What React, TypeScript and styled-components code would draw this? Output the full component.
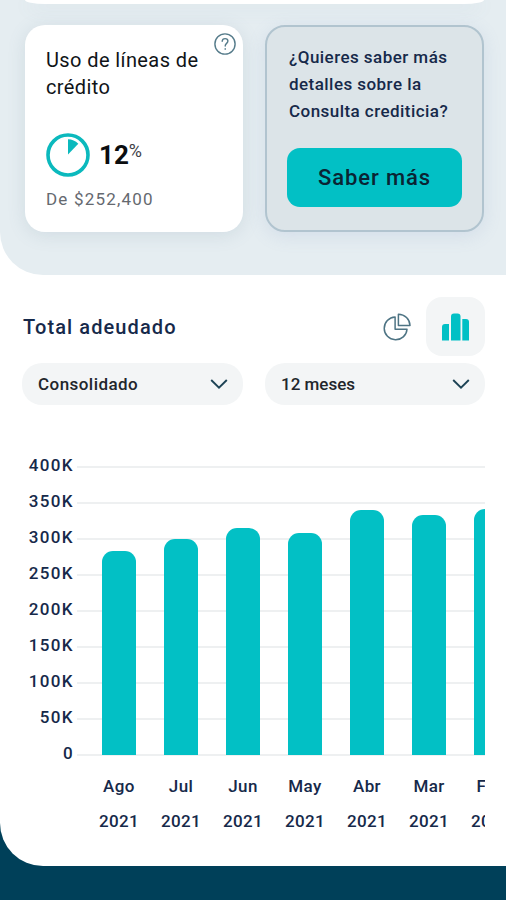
import styled, { createGlobalStyle } from "styled-components";

const TEAL = "#02c0c5";
const NAVY = "#16294a";

const STEP = 36;
const MAX_VALUE = 400;
const TICKS = ["400K", "350K", "300K", "250K", "200K", "150K", "100K", "50K", "0"];

interface IMonth {
  month: string;
  year: string;
  value: number;
}

const MONTHS: IMonth[] = [
  { month: "Ago", year: "2021", value: 283 },
  { month: "Jul", year: "2021", value: 300 },
  { month: "Jun", year: "2021", value: 315 },
  { month: "May", year: "2021", value: 308 },
  { month: "Abr", year: "2021", value: 340 },
  { month: "Mar", year: "2021", value: 333 },
  { month: "Feb", year: "2021", value: 342 },
];

const HelpIcon = () => (
  <svg width="22" height="22" viewBox="0 0 22 22" fill="none" stroke="#557b8a" strokeWidth="1.4" strokeLinecap="round">
    <circle cx="11" cy="11" r="10.1" />
    <path d="M8.2 8.3c.1-1.7 1.2-2.7 2.9-2.7s2.8 1 2.8 2.5c0 2.3-2.7 2.3-2.7 4.9" />
    <path d="M11.2 15.7v.5" />
  </svg>
);

const UsageRing = () => (
  <svg width="44" height="44" viewBox="0 0 44 44">
    <circle cx="22" cy="22" r="20" fill="none" stroke="#0bb9bd" strokeWidth="3.6" />
    <path d="M22 21.5V6.3c4 0 7.4 1.6 10.3 4.5z" fill="#0bb9bd" />
  </svg>
);

const PieIcon = () => (
  <svg width="28" height="28" viewBox="0 0 28 28" fill="none" stroke="#4e7484" strokeWidth="1.5" strokeLinejoin="round">
    <path d="M12.100 4A11.400 11.400 0 1 0 24 16.200H12.100z" />
    <path d="M15.400 1.200V12.600H27A11.600 11.600 0 0 0 15.400 1.200z" />
  </svg>
);

const BarsIcon = () => (
  <svg width="28" height="28" viewBox="0 0 28 28" fill={TEAL}>
    <path d="M0 27.5V14q0-3 3-3H7V27.500z" />
    <path d="M9 27.500V3.500q0-3 3-3H15.500q3 0 3 3V27.500z" />
    <path d="M20.300 27.500V6H24q3 0 3 3V27.500z" />
  </svg>
);

const ChevronIcon = () => (
  <svg width="18" height="12" viewBox="0 0 18 12" fill="none" stroke="#1d4355" strokeWidth="1.9">
    <path d="M1.200 2l7.800 7.600L16.800 2" />
  </svg>
);

const App = () => {
  return (
    <>
      <GlobalStyle />
      <Page>
        <Panel>
          <Summary>
            <PreviousCard />
            <CardRow>
              <UsageCard>
                <HelpButton aria-label="Ayuda">
                  <HelpIcon />
                </HelpButton>
                <UsageTitle>Uso de líneas de crédito</UsageTitle>
                <Usage>
                  <UsageRing />
                  <Percent>
                    12<PercentSign>%</PercentSign>
                  </Percent>
                </Usage>
                <Limit>De $252,400</Limit>
              </UsageCard>
              <InfoCard>
                <Question>
                  ¿Quieres saber más
                  <br />
                  detalles sobre la
                  <br />
                  Consulta crediticia?
                </Question>
                <MoreButton>Saber más</MoreButton>
              </InfoCard>
            </CardRow>
          </Summary>

          <Debt>
            <DebtHeader>
              <DebtTitle>Total adeudado</DebtTitle>
              <ViewButton aria-label="Gráfica circular">
                <PieIcon />
              </ViewButton>
              <ViewButton $active aria-label="Gráfica de barras">
                <BarsIcon />
              </ViewButton>
            </DebtHeader>
            <Filters>
              <Select>
                <SelectLabel $spacing={0.45}>Consolidado</SelectLabel>
                <ChevronIcon />
              </Select>
              <Select>
                <SelectLabel $spacing={0}>12 meses</SelectLabel>
                <ChevronIcon />
              </Select>
            </Filters>

            <Chart>
              <Axis>
                {TICKS.map((tick) => (
                  <Tick key={tick}>{tick}</Tick>
                ))}
              </Axis>
              <Plot>
                <Grid>
                  {TICKS.map((tick) => (
                    <GridLine key={tick} />
                  ))}
                </Grid>
                <Columns>
                  {MONTHS.map(({ month, year, value }) => (
                    <Column key={month}>
                      <BarTrack>
                        <Bar style={{ height: (value / MAX_VALUE) * STEP * 8 }} />
                      </BarTrack>
                      <ColumnLabel>{month}</ColumnLabel>
                      <ColumnLabel>{year}</ColumnLabel>
                    </Column>
                  ))}
                </Columns>
              </Plot>
            </Chart>
          </Debt>
        </Panel>
      </Page>
    </>
  );
};

export default App;

const GlobalStyle = createGlobalStyle`
  * {
    box-sizing: border-box;
  }

  body {
    margin: 0;
    overflow: hidden;
    font-family: Roboto, "Liberation Sans", sans-serif;
  }

  button {
    font-family: inherit;
    border: none;
    padding: 0;
  }

  svg {
    display: block;
    flex-shrink: 0;
  }
`;

const Page = styled.div`
  width: 506px;
  height: 900px;
  overflow: hidden;
  background: #004059;
`;

const Panel = styled.main`
  height: 866px;
  background: #fff;
  border-bottom-left-radius: 43px;
  overflow: hidden;
`;

const Summary = styled.section`
  height: 275px;
  padding: 0 22px 0 25px;
  background: #e5edf1;
  border-bottom-left-radius: 43px;
`;

const PreviousCard = styled.div`
  height: 4px;
  background: #fff;
  border-radius: 0 0 20px 20px / 0 0 4px 4px;
  box-shadow: 0 4px 18px rgba(110, 140, 160, 0.16);
`;

const CardRow = styled.div`
  display: grid;
  grid-template-columns: 218px 219px;
  gap: 22px;
  height: 207px;
  margin-top: 21px;
`;

const UsageCard = styled.article`
  position: relative;
  padding: 22px 21px 0;
  background: #fff;
  border-radius: 20px;
  box-shadow: 0 3px 18px rgba(100, 130, 150, 0.16);
`;

const HelpButton = styled.button`
  position: absolute;
  top: 8px;
  right: 7px;
  background: none;
`;

const UsageTitle = styled.h2`
  margin: 0;
  font-size: 20px;
  font-weight: 400;
  line-height: 27px;
  letter-spacing: 0.4px;
  color: #101418;
`;

const Usage = styled.div`
  display: flex;
  align-items: center;
  gap: 9px;
  margin-top: 32px;
`;

const Percent = styled.strong`
  display: flex;
  align-items: flex-start;
  font-size: 26px;
  font-weight: 700;
  line-height: 30px;
  color: #0b0d10;
`;

const PercentSign = styled.span`
  font-size: 18px;
  font-weight: 400;
  line-height: 21px;
  color: #3c4045;
`;

const Limit = styled.p`
  margin: 11px 0 0;
  font-size: 17px;
  line-height: 22px;
  letter-spacing: 1.2px;
  color: #65696f;
`;

const InfoCard = styled.article`
  padding: 17px 20px 0;
  background: #dce4e8;
  border: 2px solid #b1c4cf;
  border-radius: 20px;
  box-shadow: 0 4px 18px rgba(120, 145, 190, 0.16);
`;

const Question = styled.p`
  margin: 0 0 0 2px;
  font-size: 17px;
  font-weight: 500;
  line-height: 27px;
  letter-spacing: 0.45px;
  white-space: nowrap;
  color: ${NAVY};
`;

const MoreButton = styled.button`
  display: block;
  width: 175px;
  height: 59px;
  margin-top: 23px;
  border-radius: 13px;
  background: ${TEAL};
  font-size: 22px;
  font-weight: 500;
  letter-spacing: 0.9px;
  color: #0a2433;
`;

const Debt = styled.section`
  padding: 22px 21px 0 22px;
`;

const DebtHeader = styled.header`
  display: flex;
  align-items: center;
  height: 59px;
`;

const DebtTitle = styled.h2`
  flex: 1;
  margin: 0 0 0 1px;
  font-size: 20px;
  font-weight: 500;
  letter-spacing: 1.1px;
  color: ${NAVY};
`;

const ViewButton = styled.button<{ $active?: boolean }>`
  display: flex;
  align-items: center;
  justify-content: center;
  width: 59px;
  height: 59px;
  border-radius: 16px;
  background: ${({ $active }) => ($active ? "#f3f5f6" : "none")};
`;

const Filters = styled.div`
  display: grid;
  grid-template-columns: 221px 220px;
  gap: 22px;
  margin-top: 7px;
`;

const Select = styled.div`
  display: flex;
  align-items: center;
  justify-content: space-between;
  height: 42px;
  padding: 0 15px 0 16px;
  border-radius: 20px;
  background: #f3f5f6;
`;

const SelectLabel = styled.span<{ $spacing: number }>`
  font-size: 17px;
  font-weight: 500;
  letter-spacing: ${({ $spacing }) => $spacing}px;
  color: #22262b;
`;

const Chart = styled.div`
  display: flex;
  gap: 3px;
  margin-top: 42px;
`;

const Axis = styled.div`
  width: 52px;
`;

const Tick = styled.div`
  height: ${STEP}px;
  font-size: 17px;
  font-weight: 500;
  line-height: ${STEP}px;
  letter-spacing: 1.4px;
  text-align: right;
  color: ${NAVY};
`;

const Plot = styled.div`
  display: grid;
  width: 408px;
  padding-top: 19px;
  overflow: hidden;
`;

const Grid = styled.div`
  grid-area: 1 / 1;
`;

const GridLine = styled.div`
  height: ${STEP}px;
  border-top: 2px solid #eef0f1;
`;

const Columns = styled.div`
  grid-area: 1 / 1;
  display: flex;
  width: 434px;
  padding-left: 11px;
`;

const Column = styled.div`
  flex: 0 0 62px;
  display: flex;
  flex-direction: column;
  align-items: center;
`;

const BarTrack = styled.div`
  display: flex;
  align-items: flex-end;
  height: 289px;
  margin-bottom: 14px;
`;

const Bar = styled.div`
  width: 34.5px;
  border-radius: 11px 11px 0 0;
  background: ${TEAL};
`;

const ColumnLabel = styled.span`
  font-size: 17px;
  font-weight: 500;
  line-height: 35px;
  letter-spacing: 0.4px;
  color: ${NAVY};
`;
